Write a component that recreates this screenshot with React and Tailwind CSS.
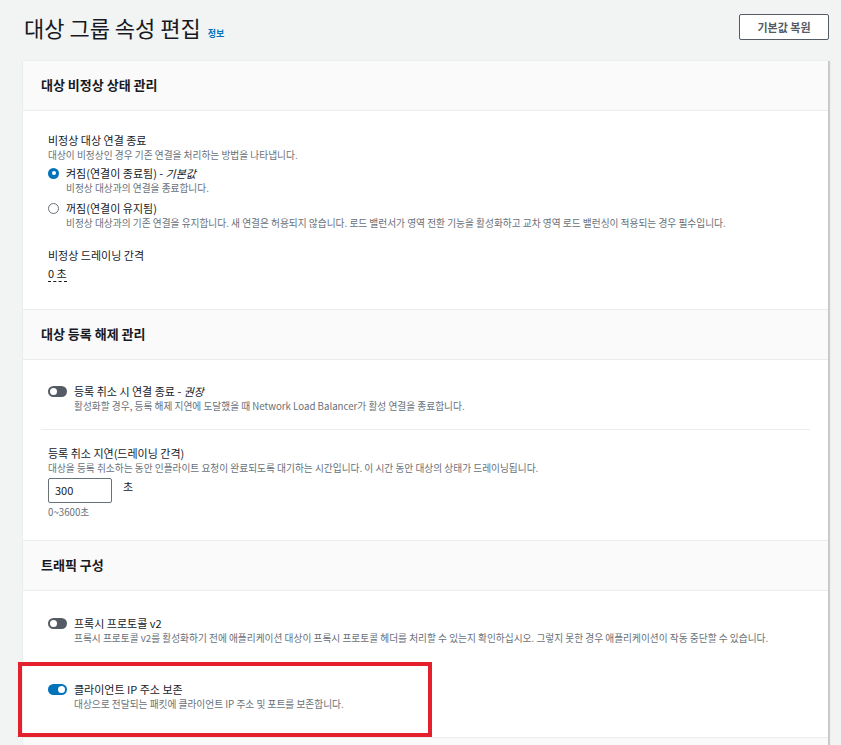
import React from 'react';

const font = { fontFamily: '"Noto Sans CJK KR", "Noto Sans", sans-serif' };

const Toggle = ({ on }) => (
  <span
    className={`relative mt-[3px] inline-block h-[11px] w-[19px] shrink-0 rounded-full ${on ? 'bg-[#0073bb]' : 'bg-[#545b64]'}`}
  >
    <span
      className={`absolute top-[2px] h-[7px] w-[7px] rounded-full bg-white ${on ? 'right-[2px]' : 'left-[2px]'}`}
    />
  </span>
);

const Radio = ({ checked }) =>
  checked ? (
    <span className="mt-[3px] flex h-[11px] w-[11px] shrink-0 items-center justify-center rounded-full bg-[#0073bb]">
      <span className="h-[4px] w-[4px] rounded-full bg-white" />
    </span>
  ) : (
    <span className="mt-[3px] h-[11px] w-[11px] shrink-0 rounded-full border border-[#687078] bg-white" />
  );

const SectionHeader = ({ children }) => (
  <div className="flex h-[50px] items-center border-b border-[#eaeded] bg-[#fafafa] px-[18px]">
    <h2 className="text-[13px] font-bold text-[#16191f]">{children}</h2>
  </div>
);

const ToggleRow = ({ on, label, desc }) => (
  <div className="flex gap-[7px]">
    <Toggle on={on} />
    <div>
      <div className="text-[11px] leading-[16px] text-[#16191f]">{label}</div>
      <div className="text-[9.7px] leading-[14px] text-[#687078]">{desc}</div>
    </div>
  </div>
);

export default function App() {
  return (
    <div className="min-h-[745px] overflow-hidden bg-[#f2f3f3] pl-[22px] pr-[12px]" style={font}>
      <div className="flex items-start justify-between pt-[14px]">
        <div className="flex items-baseline gap-[7px] pl-[2px]">
          <h1 className="text-[22px] leading-[26px] text-[#16191f]">대상 그룹 속성 편집</h1>
          <a className="text-[9px] font-bold text-[#0073bb]">정보</a>
        </div>
        <button className="h-[26px] w-[90px] rounded-[2px] border border-[#545b64] bg-white text-[11px] font-bold text-[#545b64]">
          기본값 복원
        </button>
      </div>

      <div className="relative mt-[20px] border-l border-[#eaeded] border-r border-r-[#c6c6c6] bg-white shadow-[1px_0_1px_rgba(0,0,0,0.15)]">
        <SectionHeader>대상 비정상 상태 관리</SectionHeader>
        <div className="border-b border-[#eaeded] px-[25px] pb-[28px] pt-[21px]">
          <div className="text-[11px] leading-[16px] text-[#16191f]">비정상 대상 연결 종료</div>
          <div className="text-[9.7px] leading-[14px] text-[#687078]">
            대상이 비정상인 경우 기존 연결을 처리하는 방법을 나타냅니다.
          </div>
          <div className="mt-[3px] flex gap-[7px]">
            <Radio checked />
            <div>
              <div className="text-[11px] leading-[16px] text-[#16191f]">
                켜짐(연결이 종료됨) - <i>기본값</i>
              </div>
              <div className="text-[9.7px] leading-[14px] text-[#687078]">비정상 대상과의 연결을 종료합니다.</div>
            </div>
          </div>
          <div className="mt-[5px] flex gap-[7px]">
            <Radio />
            <div>
              <div className="text-[11px] leading-[16px] text-[#16191f]">꺼짐(연결이 유지됨)</div>
              <div className="text-[9.7px] leading-[14px] text-[#687078]">
                비정상 대상과의 기존 연결을 유지합니다. 새 연결은 허용되지 않습니다. 로드 밸런서가 영역 전환 기능을 활성화하고 교차 영역 로드 밸런싱이 적용되는 경우 필수입니다.
              </div>
            </div>
          </div>
          <div className="mt-[17px] text-[11px] leading-[16px] text-[#16191f]">비정상 드레이닝 간격</div>
          <div className="mt-[2px] text-[11px] leading-[16px] text-[#16191f]">
            <span className="border-b border-dashed border-[#16191f]">0 초</span>
          </div>
        </div>

        <SectionHeader>대상 등록 해제 관리</SectionHeader>
        <div className="border-b border-[#eaeded] px-[18px] pb-[21px] pt-[23px]">
          <div className="px-[7px]">
            <ToggleRow
              label={<>등록 취소 시 연결 종료 - <i>권장</i></>}
              desc="활성화할 경우, 등록 해제 지연에 도달했을 때 Network Load Balancer가 활성 연결을 종료합니다."
            />
          </div>
          <div className="mb-[15px] mt-[16px] border-t border-[#eaeded]" />
          <div className="px-[7px]">
            <div className="text-[11px] leading-[16px] text-[#16191f]">등록 취소 지연(드레이닝 간격)</div>
            <div className="text-[9.7px] leading-[14px] text-[#687078]">
              대상을 등록 취소하는 동안 인플라이트 요청이 완료되도록 대기하는 시간입니다. 이 시간 동안 대상의 상태가 드레이닝됩니다.
            </div>
            <div className="mt-[3px] flex items-start gap-[11px]">
              <div className="flex h-[25px] w-[64px] items-center rounded-[2px] border border-[#687078] px-[6px] text-[11px] text-[#16191f]">
                300
              </div>
              <span className="text-[11px] leading-[16px] text-[#16191f]">초</span>
            </div>
            <div className="mt-[2px] text-[9.7px] leading-[14px] text-[#687078]">0~3600초</div>
          </div>
        </div>

        <SectionHeader>트래픽 구성</SectionHeader>
        <div className="border-b border-[#eaeded] px-[25px] pb-[26px] pt-[24px]">
          <ToggleRow
            label="프록시 프로토콜 v2"
            desc="프록시 프로토콜 v2를 활성화하기 전에 애플리케이션 대상이 프록시 프로토콜 헤더를 처리할 수 있는지 확인하십시오. 그렇지 못한 경우 애플리케이션이 작동 중단할 수 있습니다."
          />
          <div className="mt-[36px]">
            <ToggleRow on label="클라이언트 IP 주소 보존" desc="대상으로 전달되는 패킷에 클라이언트 IP 주소 및 포트를 보존합니다." />
          </div>
        </div>
        <div className="h-[10px] bg-[#fafafa]" />

        <div className="pointer-events-none absolute left-[-5px] top-[601px] h-[75px] w-[414px] border-[4px] border-[#e3202b]" />
      </div>
    </div>
  );
}
